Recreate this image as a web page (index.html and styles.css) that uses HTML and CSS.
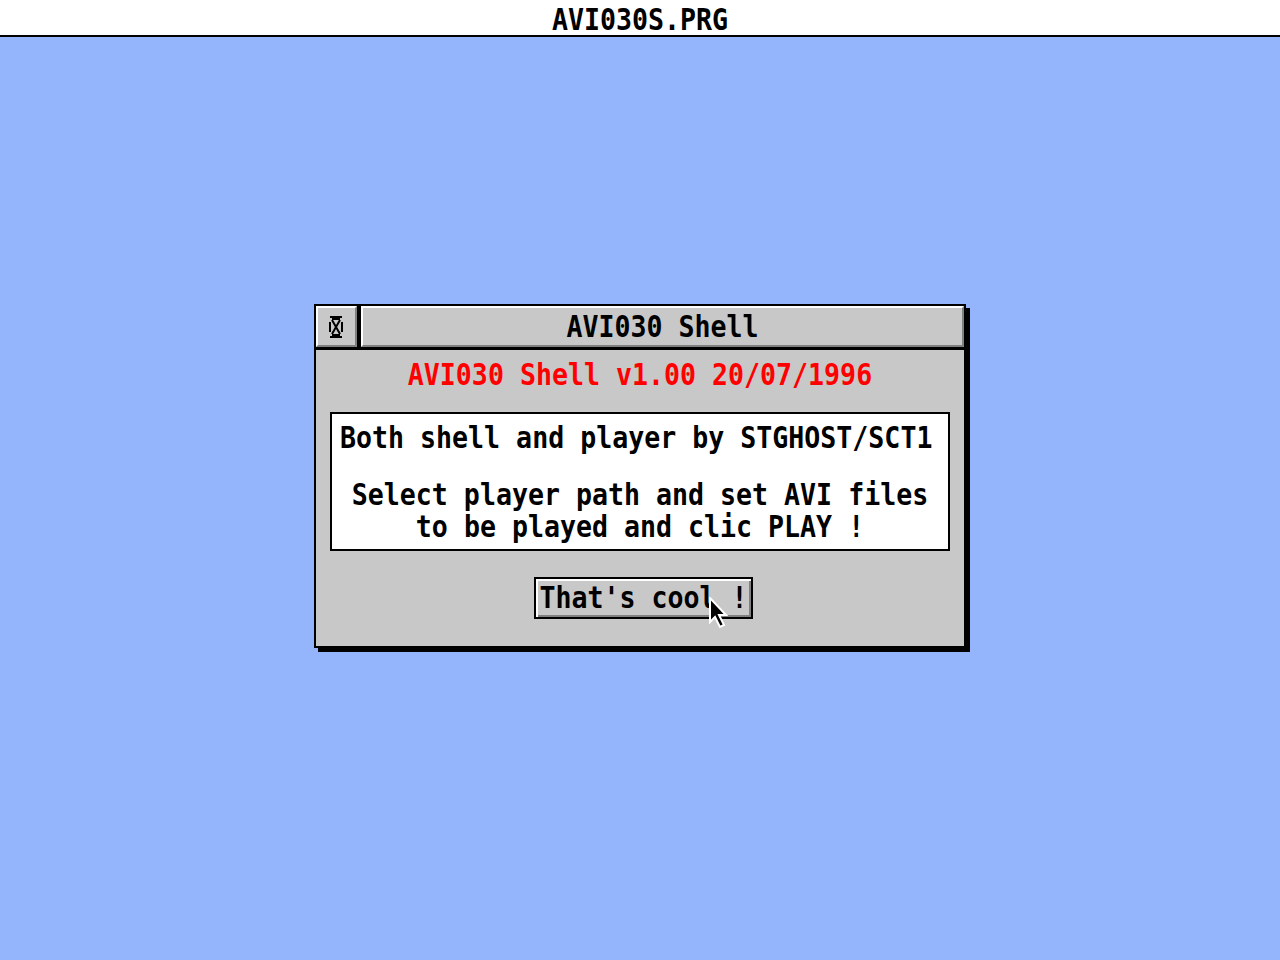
FILE: index.html
```html
<!DOCTYPE html>
<html lang="en">
<head>
<meta charset="utf-8">
<title>AVI030S.PRG</title>
<link rel="stylesheet" href="styles.css">
</head>
<body>
  <header class="menubar">
    <span class="glyphs">AVI030S.PRG</span>
  </header>

  <main class="desktop">
    <section class="window">
      <div class="titlebar">
        <div class="closer">
          <svg width="14" height="22" viewBox="0 0 14 22" aria-hidden="true">
            <rect x="1" y="0" width="12" height="2" fill="#000"/>
            <rect x="1" y="20" width="12" height="2" fill="#000"/>
            <rect x="3" y="2" width="8" height="2" fill="#000"/>
            <rect x="3" y="18" width="8" height="2" fill="#000"/>
            <path d="M3 4 L11 18 M11 4 L3 18" stroke="#000" stroke-width="2" fill="none"/>
            <rect x="0" y="6" width="2" height="10" fill="#000"/>
            <rect x="12" y="6" width="2" height="10" fill="#000"/>
          </svg>
        </div>
        <div class="title"><span class="glyphs">AVI030 Shell</span></div>
      </div>

      <div class="dialog">
        <p class="version"><span class="glyphs">AVI030 Shell v1.00 20/07/1996</span></p>
        <div class="infobox">
          <p class="line first"><span class="glyphs">Both shell and player by STGHOST/SCT1</span></p>
          <p class="line gap"><span class="glyphs">Select player path and set AVI files</span></p>
          <p class="line"><span class="glyphs">to be played and clic PLAY !</span></p>
        </div>
        <button class="ok" type="button"><span class="glyphs">That's cool !</span></button>
      </div>

      <svg class="pointer" width="22" height="32" viewBox="0 0 22 32" aria-hidden="true">
        <path d="M1 1 L1 25 L6 20 L11 30 L15 28 L10 18 L17 18 Z" fill="#000" stroke="#fff" stroke-width="2" stroke-linejoin="miter"/>
      </svg>
    </section>
  </main>
</body>
</html>
```

FILE: styles.css
```css
html, body {
  margin: 0;
  padding: 0;
}

body {
  width: 1280px;
  height: 960px;
  display: flex;
  flex-direction: column;
  background: #94b4fc;
  font-family: "DejaVu Sans Mono", "Liberation Mono", monospace;
  font-size: 26.6px;
  font-weight: bold;
  color: #000;
  overflow: hidden;
}

/* tall system-font look: stretch glyphs vertically */
.glyphs {
  display: inline-block;
  white-space: pre;
  line-height: 27px;
  transform: scaleY(1.12);
}

/* top menu bar */
.menubar {
  height: 31px;
  padding-top: 4px;
  background: #fff;
  border-bottom: 2px solid #000;
  display: flex;
  align-items: center;
  justify-content: center;
}

.desktop {
  flex: 1;
  padding-top: 267px;
}

/* dialog window */
.window {
  position: relative;
  box-sizing: border-box;
  width: 652px;
  margin: 0 auto;
  border: 2px solid #000;
  box-shadow: 4px 4px 0 #000;
  background: #c8c8c8;
}

.titlebar {
  display: flex;
  gap: 4px;
  height: 41px;
  background: #000;
  border-bottom: 3px solid #000;
}

.closer,
.title {
  box-sizing: border-box;
  background: #c8c8c8;
  border-top: 2px solid #fff;
  border-left: 2px solid #fff;
  border-bottom: 2px solid #808080;
  border-right: 2px solid #808080;
  display: flex;
  align-items: center;
  justify-content: center;
}

.closer {
  width: 41px;
}

.closer svg {
  display: block;
  margin-left: -2px;
}

.title {
  flex: 1;
}

.dialog {
  display: flex;
  flex-direction: column;
  align-items: center;
  padding: 9px 14px 27px;
}

.version {
  margin: 0 0 21px;
  height: 32px;
  line-height: 32px;
  color: #ff0000;
}

.infobox {
  box-sizing: border-box;
  align-self: stretch;
  height: 139px;
  background: #fff;
  border: 2px solid #000;
  padding: 8px 0 6px;
}

.line {
  margin: 0;
  height: 32px;
  line-height: 32px;
  text-align: center;
}

.line.first {
  text-align: left;
  padding-left: 8px;
}

.line.gap {
  margin-top: 25px;
}

.ok {
  margin: 26px 0 0 7px;
  box-sizing: border-box;
  width: 219px;
  height: 42px;
  padding: 0;
  border: 2px solid #000;
  background: #c8c8c8;
  box-shadow: inset 2px 2px 0 #fff, inset -2px -2px 0 #808080;
  font: inherit;
  color: #000;
  line-height: 38px;
}

/* mouse pointer resting over the button */
.pointer {
  position: absolute;
  left: 393px;
  top: 291px;
}
```
